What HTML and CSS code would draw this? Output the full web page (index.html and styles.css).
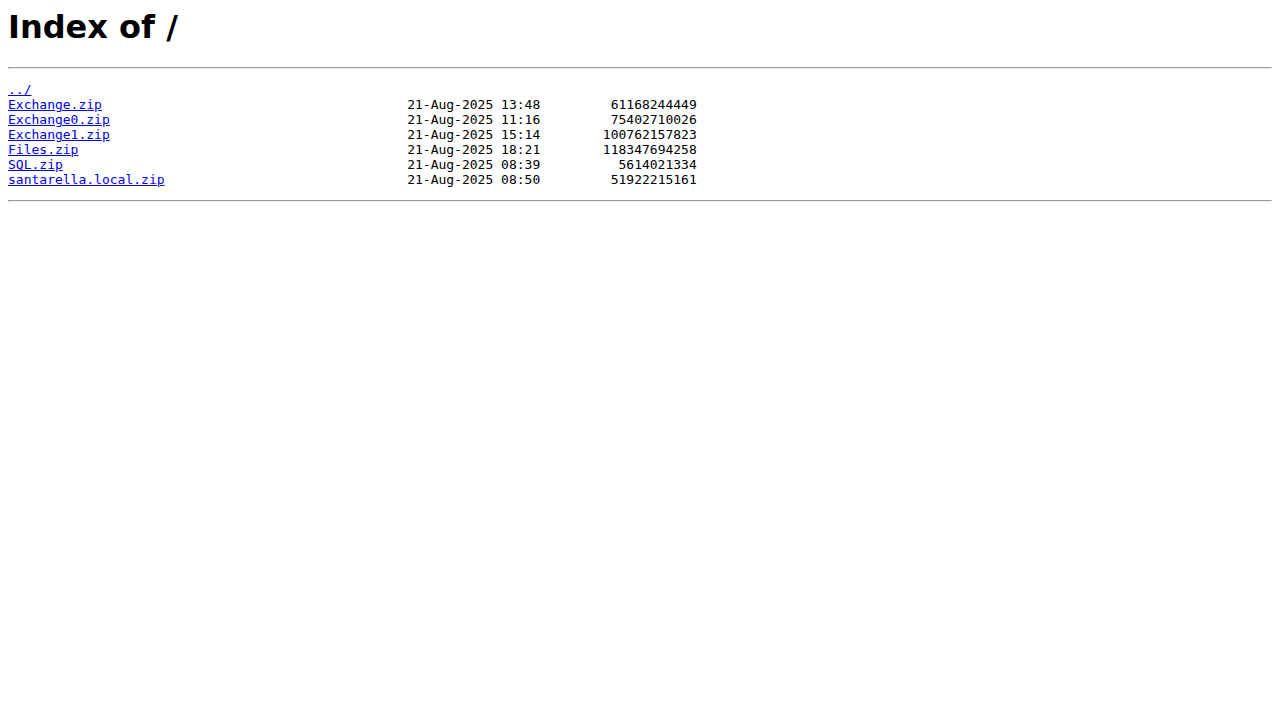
FILE: index.html
```html
<!DOCTYPE html>
<html lang="en">
<head>
    <meta charset="UTF-8">
    <title>Index of /</title>
    <link rel="stylesheet" href="styles.css">
</head>
<body class="listing">
<h1 class="listing-title">Index of /</h1><hr class="rule"><pre class="files"><a href="../">../</a>
<a href="Exchange.zip">Exchange.zip</a>                                       21-Aug-2025 13:48         61168244449
<a href="Exchange0.zip">Exchange0.zip</a>                                      21-Aug-2025 11:16         75402710026
<a href="Exchange1.zip">Exchange1.zip</a>                                      21-Aug-2025 15:14        100762157823
<a href="Files.zip">Files.zip</a>                                          21-Aug-2025 18:21        118347694258
<a href="SQL.zip">SQL.zip</a>                                            21-Aug-2025 08:39          5614021334
<a href="santarella.local.zip">santarella.local.zip</a>                               21-Aug-2025 08:50         51922215161
</pre><hr class="rule">
</body>
</html>
```

FILE: styles.css
```css
.listing {
    font-family: "DejaVu Sans", sans-serif;
    background: #fff;
    color: #000;
}
.listing-title {
    font-size: 32px;
    font-weight: bold;
    margin-top: 0;
}
.files {
    font-family: "DejaVu Sans Mono", monospace;
    font-size: 13px;
    line-height: 15px;
}
.files a {
    color: #0000ee;
}
```
